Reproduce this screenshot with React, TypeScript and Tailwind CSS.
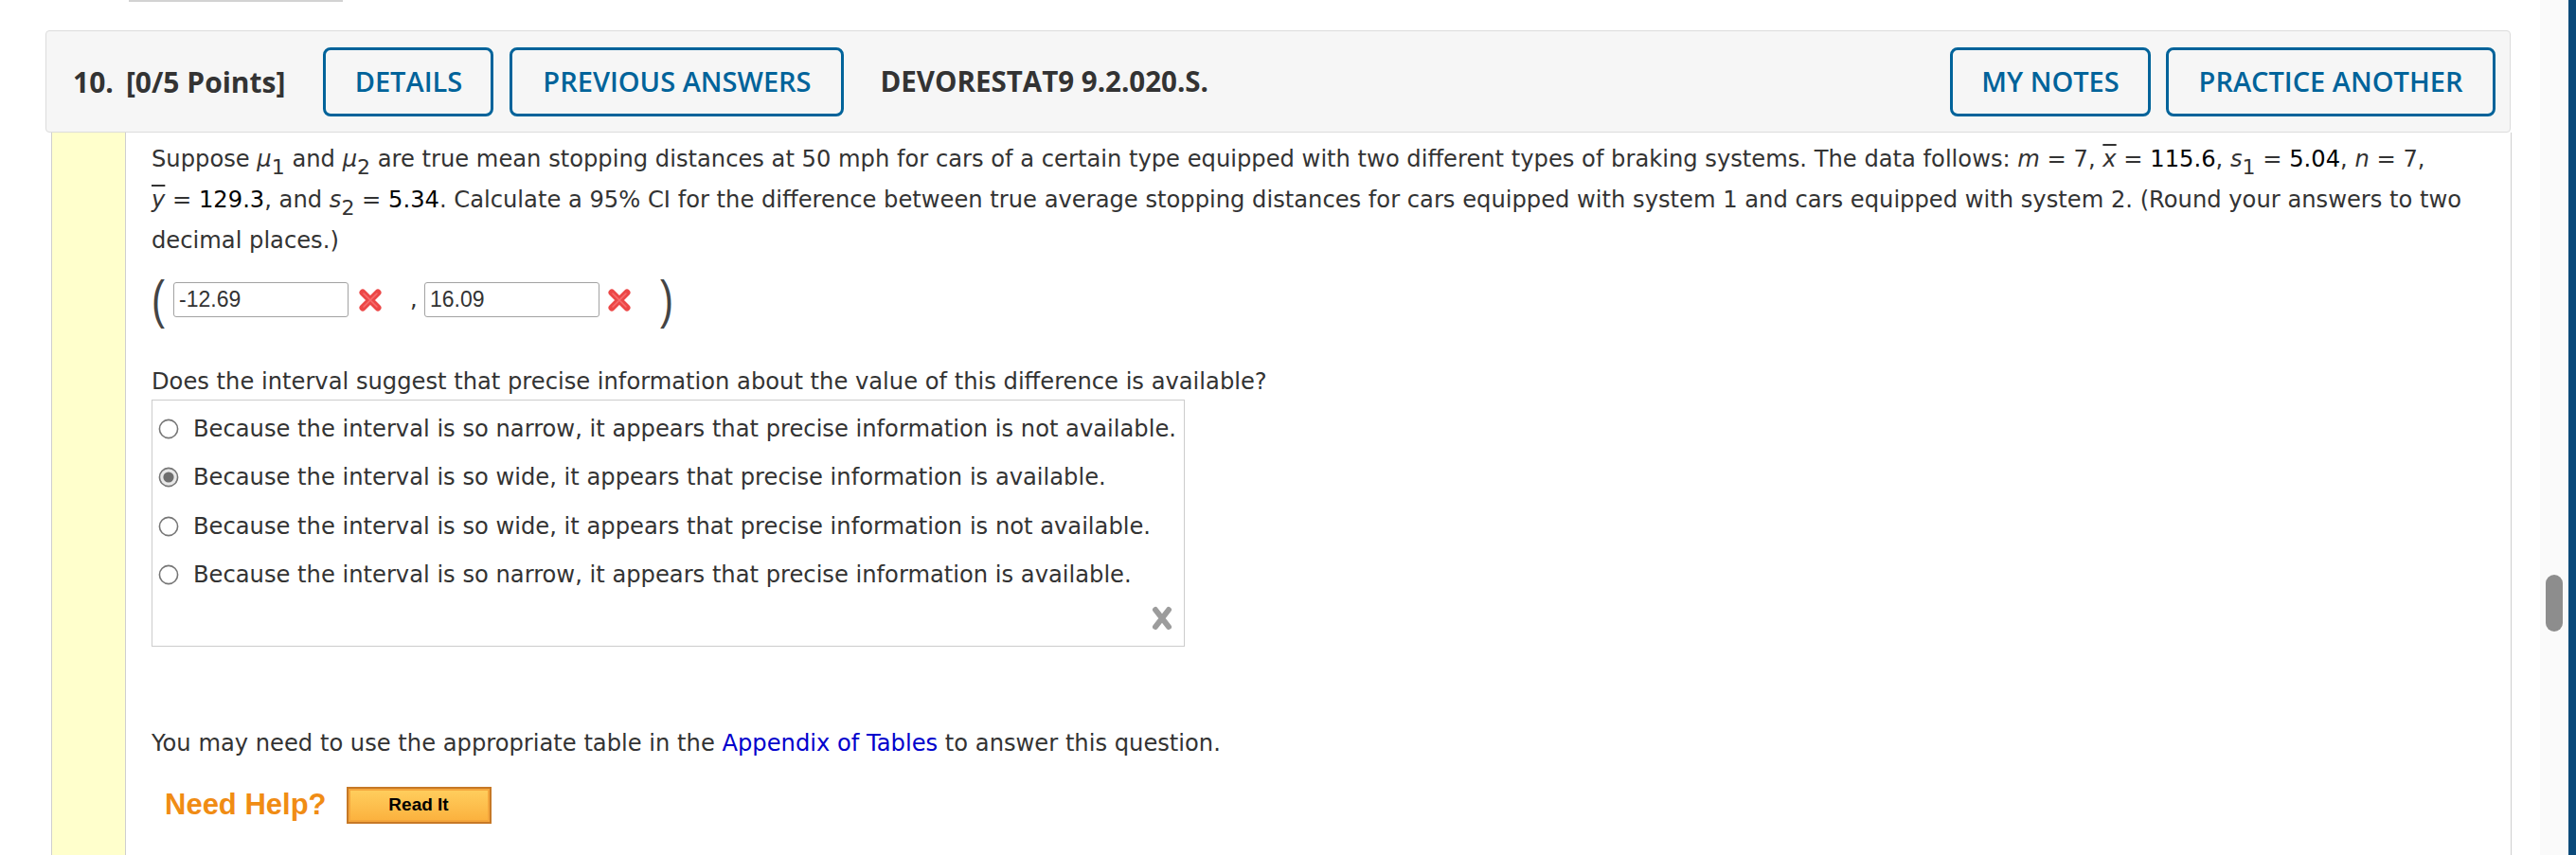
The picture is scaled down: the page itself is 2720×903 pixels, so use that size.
import React from 'react';

const body = "font-['DejaVu_Sans',Verdana,sans-serif] text-[24.2px] text-[#333]";
const sub = 'text-[22px] -bottom-[8px]';

function RedX() {
  return (
    <svg width="26" height="24" viewBox="0 0 26 24" className="shrink-0">
      <path d="M5 4 L21 20 M21 4 L5 20" stroke="#ec4747" strokeWidth="7" strokeLinecap="round" />
      <path d="M6 5 L20 19 M20 5 L6 19" stroke="#ff8e8e" strokeWidth="1.6" strokeLinecap="round" opacity="0.55" />
    </svg>
  );
}

function GrayX() {
  return (
    <svg width="28" height="26" viewBox="0 0 28 26">
      <path d="M7 4 L21 22 M21 4 L7 22" stroke="#9c9c9c" strokeWidth="6" strokeLinecap="round" />
    </svg>
  );
}

function Radio({ checked }: { checked?: boolean }) {
  return (
    <svg width="22" height="22" viewBox="0 0 22 22" className="shrink-0">
      <circle cx="11" cy="11" r="9.6" fill={checked ? '#e8e8e8' : '#fff'} stroke="#767676" strokeWidth="1.6" />
      {checked && <circle cx="11" cy="11" r="5.6" fill="#6e6e6e" />}
    </svg>
  );
}

function OutlineButton({ label, width }: { label: string; width: string }) {
  return (
    <button className={`${width} h-[73px] shrink-0 rounded-[8px] border-[3px] border-[#00639a] text-[#00639a] text-[29px] font-semibold uppercase`}>
      {label}
    </button>
  );
}

const options = [
  'Because the interval is so narrow, it appears that precise information is not available.',
  'Because the interval is so wide, it appears that precise information is available.',
  'Because the interval is so wide, it appears that precise information is not available.',
  'Because the interval is so narrow, it appears that precise information is available.',
];

export default function App() {
  return (
    <div className="w-[2720px] h-[903px] overflow-hidden bg-white flex">
      <div className="flex-1 flex flex-col">
        <div className="ml-[136px] w-[226px] h-[2px] bg-[#d2d2d2]" />

        {/* question header */}
        <div className="mt-[30px] ml-[48px] w-[2603px] h-[108px] shrink-0 flex items-center pl-[28px] pr-[15px] bg-[#f6f6f6] border border-[#dcdcdc] rounded-[4px] font-['Open_Sans',sans-serif] text-[#333]">
          <span className="text-[30px] font-bold">10.</span>
          <span className="ml-[13px] text-[30px] font-bold">[0/5 Points]</span>
          <div className="ml-[40px] flex gap-[17px]">
            <OutlineButton label="Details" width="w-[180px]" />
            <OutlineButton label="Previous Answers" width="w-[353px]" />
          </div>
          <span className="ml-[38px] text-[29.5px] font-bold">DEVORESTAT9 9.2.020.S.</span>
          <div className="ml-auto flex gap-[16px]">
            <OutlineButton label="My Notes" width="w-[212px]" />
            <OutlineButton label="Practice Another" width="w-[348px]" />
          </div>
        </div>

        {/* question body */}
        <div className="ml-[54px] w-[2598px] flex-1 flex">
          <div className="w-[79px] shrink-0 bg-[#ffffcc] border-x border-[#cfcfcf]" />
          <div className={`flex-1 pl-[27px] pt-[7px] border-r border-[#cfcfcf] ${body}`}>
            <p className="leading-[43px] whitespace-nowrap">
              Suppose <i>μ</i><sub className={sub}>1</sub> and <i>μ</i><sub className={sub}>2</sub> are true mean stopping distances at 50 mph for cars of a certain type equipped with two different types of braking systems. The data follows: <i>m</i> = 7, <i className="overline">x</i> = <span className="text-black">115.6</span>, <i>s</i><sub className={sub}>1</sub> = <span className="text-black">5.04</span>, <i>n</i> = 7,
              <br />
              <i className="overline">y</i> = <span className="text-black">129.3</span>, and <i>s</i><sub className={sub}>2</sub> = <span className="text-black">5.34</span>. Calculate a 95% CI for the difference between true average stopping distances for cars equipped with system 1 and cars equipped with system 2. (Round your answers to two
              <br />
              decimal places.)
            </p>

            <div className="mt-[14px] h-[53px] flex items-center">
              <span className="w-[23px] font-['Liberation_Sans',Arial,sans-serif] text-[42px] leading-none text-[#444] scale-y-[1.3]">(</span>
              <input readOnly value="-12.69" className="w-[185px] h-[37px] px-[5px] border border-[#a3a3a3] rounded-[3px] font-['Liberation_Sans',Arial,sans-serif] text-[23px] text-[#333] outline-none" />
              <span className="ml-[10px]"><RedX /></span>
              <span className="ml-[29px] w-[7px]">,</span>
              <input readOnly value="16.09" className="ml-[8px] w-[185px] h-[37px] px-[5px] border border-[#a3a3a3] rounded-[3px] font-['Liberation_Sans',Arial,sans-serif] text-[23px] text-[#333] outline-none" />
              <span className="ml-[8px]"><RedX /></span>
              <span className="ml-[30px] font-['Liberation_Sans',Arial,sans-serif] text-[42px] leading-none text-[#444] scale-y-[1.3]">)</span>
            </div>

            <p className="mt-[41px] leading-[38px] whitespace-nowrap">Does the interval suggest that precise information about the value of this difference is available?</p>

            <div className="w-[1091px] h-[261px] border border-[#cccccc] pt-[4px] pl-[6px] pr-[9px] flex flex-col">
              {options.map((o, i) => (
                <label key={i} className="h-[51.5px] flex items-center gap-[15px] whitespace-nowrap">
                  <Radio checked={i === 1} />
                  <span>{o}</span>
                </label>
              ))}
              <div className="mt-[7px] flex justify-end">
                <GrayX />
              </div>
            </div>

            <p className="mt-[81px] leading-[43px] whitespace-nowrap">
              You may need to use the appropriate table in the <a href="#" className="text-[#0000cc]">Appendix of Tables</a> to answer this question.
            </p>

            <div className="mt-[20px] ml-[14px] flex items-center gap-[21px] font-['Liberation_Sans',Arial,sans-serif]">
              <span className="text-[31px] font-bold text-[#f08c14]">Need Help?</span>
              <button className="w-[153px] h-[39px] border-2 border-[#c67826] bg-gradient-to-b from-[#ffcf5e] to-[#fbb03c] shadow-[inset_0_0_0_2px_#f4a63c] text-[19px] font-bold text-black">
                Read It
              </button>
            </div>
          </div>
        </div>
      </div>

      {/* scrollbar */}
      <div className="w-[30px] shrink-0 bg-[#fafafa]">
        <div className="mt-[607px] ml-[6px] w-[18px] h-[60px] rounded-full bg-[#8d8d8d]" />
      </div>
      <div className="w-[8px] shrink-0 bg-[#0b4a7a]" />
    </div>
  );
}
